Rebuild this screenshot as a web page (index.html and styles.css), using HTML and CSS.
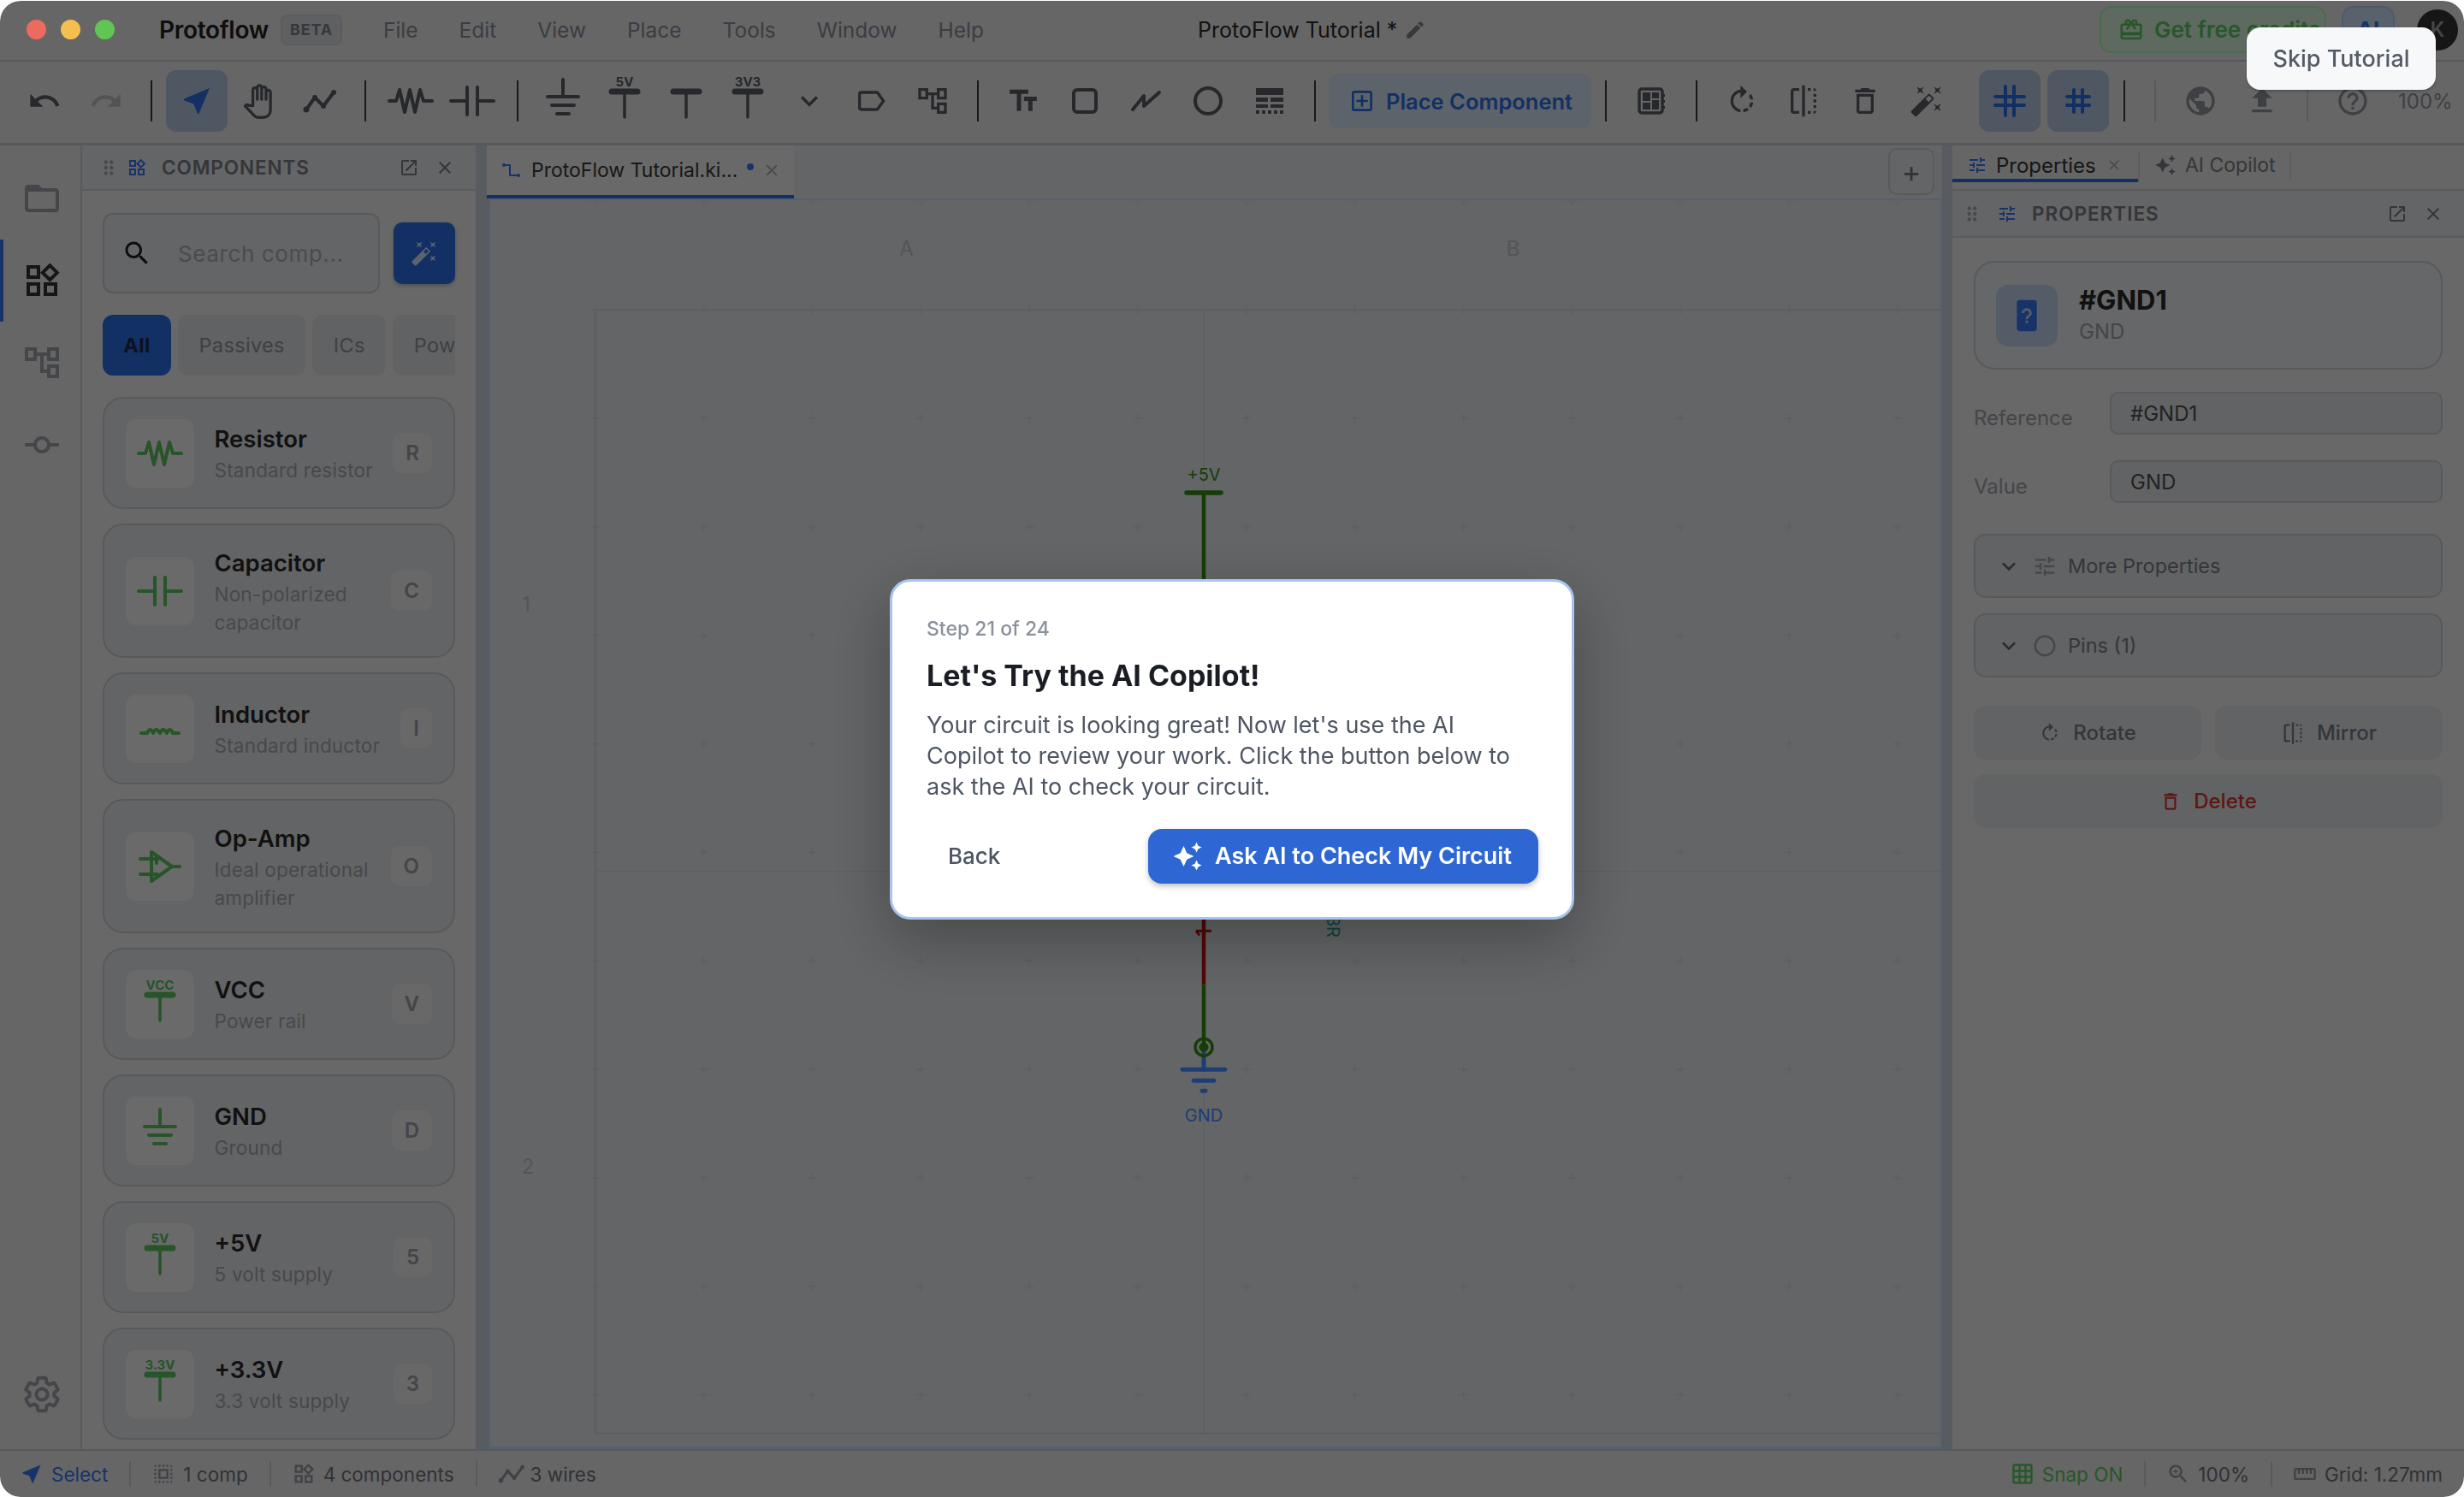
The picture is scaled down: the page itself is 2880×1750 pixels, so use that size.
FILE: index.html
```html
<!DOCTYPE html>
<html lang="en">
<head>
  <meta charset="UTF-8">
  <title>Protoflow</title>
  <link rel="stylesheet" href="styles.css">
</head>
<body>
<svg class="sprite" aria-hidden="true">
  <symbol id="i-undo" viewBox="0 0 24 24"><path d="M12.5 8c-2.65 0-5.05.99-6.9 2.6L2 7v9h9l-3.62-3.62c1.39-1.16 3.16-1.88 5.12-1.88 3.54 0 6.55 2.31 7.6 5.5l2.37-.78C21.08 11.03 17.15 8 12.5 8z"/></symbol>
  <symbol id="i-redo" viewBox="0 0 24 24"><path d="M18.4 10.6C16.55 8.99 14.15 8 11.5 8c-4.65 0-8.58 3.03-9.96 7.22L3.9 16c1.05-3.19 4.05-5.5 7.6-5.5 1.95 0 3.73.72 5.12 1.88L13 16h9V7l-3.6 3.6z"/></symbol>
  <symbol id="i-near" viewBox="0 0 24 24"><path d="M21 3L3 10.53v.98l6.84 2.65L12.48 21h.98L21 3z"/></symbol>
  <symbol id="i-hand" viewBox="0 0 24 24"><path class="st s18" d="M8.5 15V5a1.4 1.4 0 0 1 2.8 0v6V3.5a1.4 1.4 0 0 1 2.8 0V11V4.5a1.4 1.4 0 0 1 2.8 0V11V6.5a1.4 1.4 0 0 1 2.8 0V18c0 2.5-2 4.5-4.5 4.5H12c-1 0-2-.4-2.7-1.2l-5.8-6.1c.6-.7 1.6-.9 2.4-.4z"/></symbol>
  <symbol id="i-wire" viewBox="0 0 56 56"><path class="st" d="M12 38 22 24l10 10 12-16"/><circle cx="12" cy="38" r="3.5"/><circle cx="22" cy="24" r="3"/><circle cx="32" cy="34" r="3"/><circle cx="44" cy="18" r="3"/></symbol>
  <symbol id="i-res" viewBox="0 0 56 56"><path class="st" d="M3 28h8l4-13 6 26 6-26 6 26 6-26 4 13h10"/></symbol>
  <symbol id="i-cap" viewBox="0 0 56 56"><path class="st" d="M3 28h19M22 12v32M34 12v32M34 28h19"/></symbol>
  <symbol id="i-ind" viewBox="0 0 56 56"><path class="st" d="M6 33h7q3.500-8 7 0q3.500-8 8 0q3.500-8 8 0q3.500-8 7 0h7"/></symbol>
  <symbol id="i-opamp" viewBox="0 0 56 56"><path class="st" d="M18 11 42 28 18 45zM42 28h9M5 19h20M5 37h20M24 15v9"/></symbol>
  <symbol id="i-gnd" viewBox="0 0 56 56"><path class="st" d="M28 3v20M10 23h36M15 33h26M21 43h14"/></symbol>
  <symbol id="i-rail" viewBox="0 0 56 56"><path class="st s3" d="M28 17v30"/><path class="st s6" d="M13 17h30"/></symbol>
  <symbol id="i-tag" viewBox="0 0 24 24"><path d="M17.630 5.840C17.270 5.330 16.670 5 16 5L5 5.010C3.900 5.010 3 5.900 3 7v10c0 1.100.9 1.990 2 1.990L16 19c.67 0 1.270-.33 1.630-.84L22 12l-4.370-6.160zM16 17H5V7h11l3.550 5L16 17z"/></symbol>
  <symbol id="i-tree" viewBox="0 0 24 24"><path d="M22 11V3h-7v3H9V3H2v8h7V8h2v10h4v3h7v-8h-7v3h-2V8h2v3h7zM7 9H4V5h3v4zm10 6h3v4h-3v-4zm0-10h3v4h-3V5z"/></symbol>
  <symbol id="i-title" viewBox="0 0 24 24"><path d="M2.500 4v3h5v12h3V7h5V4h-13zm19 5h-9v3h3v7h3v-7h3V9z"/></symbol>
  <symbol id="i-rect" viewBox="0 0 56 56"><rect class="st" x="15" y="15" width="26" height="26" rx="4"/></symbol>
  <symbol id="i-line" viewBox="0 0 56 56"><path class="st" d="M12 38 25 22v12l18-16"/></symbol>
  <symbol id="i-circle" viewBox="0 0 56 56"><circle class="st" cx="28" cy="28" r="15"/></symbol>
  <symbol id="i-table" viewBox="0 0 56 56"><path d="M12 13h32v8H12zM12 24h14v5H12zM29 24h15v5H29zM12 32h14v4H12zM29 32h15v4H29zM12 39h4v4h-4zM19 39h4v4h-4zM26 39h4v4h-4zM33 39h4v4h-4zM40 39h4v4h-4z"/></symbol>
  <symbol id="i-chip" viewBox="0 0 56 56"><rect class="st s3" x="14" y="14" width="27" height="28" rx="3"/><path d="M18 18h9v10h-9zM29 18h8v7h-8zM18 30h9v8h-9zM29 27h8v11h-8zM41 20h3v3h-3zM41 27h3v3h-3zM41 34h3v3h-3z"/></symbol>
  <symbol id="i-add" viewBox="0 0 24 24"><path d="M19 3H5c-1.110 0-2 .9-2 2v14c0 1.100.89 2 2 2h14c1.100 0 2-.9 2-2V5c0-1.100-.9-2-2-2zm0 16H5V5h14v14zm-8-2h2v-4h4v-2h-4V7h-2v4H7v2h4z"/></symbol>
  <symbol id="i-rotate" viewBox="0 0 24 24"><path d="M15.550 5.550L11 1v3.070C7.060 4.560 4 7.920 4 12s3.050 7.440 7 7.930v-2.020c-2.840-.48-5-2.940-5-5.910s2.160-5.430 5-5.910V10l4.550-4.450zM19.930 11c-.17-1.390-.72-2.730-1.620-3.890l-1.420 1.420c.54.75.88 1.600 1.020 2.470h2.020zM13 17.900v2.020c1.390-.17 2.740-.71 3.900-1.610l-1.440-1.440c-.75.54-1.590.89-2.460 1.030zm3.890-2.420l1.420 1.410c.9-1.160 1.450-2.500 1.620-3.890h-2.020c-.14.87-.48 1.720-1.020 2.480z"/></symbol>
  <symbol id="i-flip" viewBox="0 0 24 24"><path d="M15 21h2v-2h-2v2zm4-12h2V7h-2v2zM3 5v14c0 1.100.9 2 2 2h4v-2H5V5h4V3H5c-1.100 0-2 .9-2 2zm16-2v2h2c0-1.100-.9-2-2-2zm-8 20h2V1h-2v22zm8-6h2v-2h-2v2zM15 5h2V3h-2v2zm4 8h2v-2h-2v2zm0 8c1.100 0 2-.9 2-2h-2v2z"/></symbol>
  <symbol id="i-trash" viewBox="0 0 24 24"><path d="M6 19c0 1.100.9 2 2 2h8c1.100 0 2-.9 2-2V7H6v12zM8 9h8v10H8V9zm7.500-5l-1-1h-5l-1 1H5v2h14V4z"/></symbol>
  <symbol id="i-wand" viewBox="0 0 24 24"><path d="M7.500 5.600L10 7 8.600 4.500 10 2 7.500 3.400 5 2l1.400 2.500L5 7zm12 9.800L17 14l1.400 2.500L17 19l2.500-1.400L22 19l-1.400-2.500L22 14zM22 2l-2.500 1.400L17 2l1.400 2.500L17 7l2.500-1.400L22 7l-1.400-2.500zm-7.630 5.290c-.39-.39-1.020-.39-1.410 0L1.290 18.960c-.39.39-.39 1.020 0 1.410l2.340 2.340c.39.39 1.020.39 1.410 0L16.700 11.050c.39-.39.39-1.020 0-1.410l-2.330-2.350zm-1.030 5.490l-2.120-2.120 2.440-2.440 2.120 2.120-2.440 2.440z"/></symbol>
  <symbol id="i-hash1" viewBox="0 0 56 56"><path class="st" d="M23 11v34M33 11v34M11 23h34M11 33h34"/></symbol>
  <symbol id="i-hash2" viewBox="0 0 56 56"><path class="st" d="M23 15v26M33 15v26M15 23h26M15 33h26"/></symbol>
  <symbol id="i-globe" viewBox="0 0 24 24"><path d="M12 2C6.480 2 2 6.480 2 12s4.480 10 10 10 10-4.480 10-10S17.520 2 12 2zm-1 17.930c-3.950-.49-7-3.850-7-7.930 0-.62.08-1.210.21-1.790L9 15v1c0 1.100.9 2 2 2v1.930zm6.900-2.540c-.26-.81-1-1.390-1.900-1.390h-1v-3c0-.55-.45-1-1-1H8v-2h2c.55 0 1-.45 1-1V7h2c1.100 0 2-.9 2-2v-.41c2.930 1.190 5 4.060 5 7.410 0 2.080-.8 3.970-2.100 5.390z"/></symbol>
  <symbol id="i-upload" viewBox="0 0 24 24"><path d="M5 20h14v-2H5v2zm0-10h4v6h6v-6h4l-7-7-7 7z"/></symbol>
  <symbol id="i-help" viewBox="0 0 24 24"><path d="M11 18h2v-2h-2v2zm1-16C6.480 2 2 6.480 2 12s4.480 10 10 10 10-4.480 10-10S17.520 2 12 2zm0 18c-4.410 0-8-3.590-8-8s3.590-8 8-8 8 3.590 8 8-3.590 8-8 8zm0-14c-2.210 0-4 1.790-4 4h2c0-1.100.9-2 2-2s2 .9 2 2c0 2-3 1.750-3 5h2c0-2.250 3-2.500 3-5 0-2.210-1.790-4-4-4z"/></symbol>
  <symbol id="i-gift" viewBox="0 0 24 24"><path d="M20 6h-2.180c.11-.31.18-.65.18-1 0-1.660-1.340-3-3-3-1.050 0-1.960.54-2.500 1.350l-.5.67-.5-.68C10.960 2.540 10.050 2 9 2 7.340 2 6 3.340 6 5c0 .35.07.69.18 1H4c-1.110 0-1.990.89-1.990 2L2 19c0 1.110.89 2 2 2h16c1.110 0 2-.89 2-2V8c0-1.110-.89-2-2-2zm-5-2c.55 0 1 .45 1 1s-.45 1-1 1-1-.45-1-1 .45-1 1-1zM9 4c.55 0 1 .45 1 1s-.45 1-1 1-1-.45-1-1 .45-1 1-1zm11 15H4v-2h16v2zm0-5H4V8h5.080L7 10.830 8.620 12 11 8.760l1-1.360 1 1.360L15.380 12 17 10.830 14.920 8H20v6z"/></symbol>
  <symbol id="i-pencil" viewBox="0 0 24 24"><path d="M3 17.250V21h3.750L17.810 9.940l-3.750-3.750L3 17.250zM20.710 7.040c.39-.39.39-1.020 0-1.410l-2.340-2.340c-.39-.39-1.020-.39-1.410 0l-1.830 1.830 3.750 3.750 1.830-1.830z"/></symbol>
  <symbol id="i-folder" viewBox="0 0 24 24"><path d="M20 6h-8l-2-2H4c-1.100 0-1.990.9-1.990 2L2 18c0 1.100.9 2 2 2h16c1.100 0 2-.9 2-2V8c0-1.100-.9-2-2-2zm0 12H4V8h16v10z"/></symbol>
  <symbol id="i-widgets" viewBox="0 0 24 24"><path d="M16.660 4.520l2.830 2.830-2.830 2.830-2.830-2.830 2.830-2.830M9 5v4H5V5h4m10 10v4h-4v-4h4M9 15v4H5v-4h4m7.660-13.310L11 7.340 16.660 13l5.660-5.660-5.660-5.650zM11 3H3v8h8V3zm10 10h-8v8h8v-8zm-10 0H3v8h8v-8z"/></symbol>
  <symbol id="i-commit" viewBox="0 0 24 24"><path d="M16.900 11c-.46-2.280-2.480-4-4.900-4s-4.440 1.720-4.900 4H2v2h5.100c.46 2.280 2.480 4 4.900 4s4.440-1.720 4.900-4H22v-2h-5.100zM12 15c-1.660 0-3-1.340-3-3s1.340-3 3-3 3 1.340 3 3-1.340 3-3 3z"/></symbol>
  <symbol id="i-gear" viewBox="0 0 24 24"><path class="st s2" d="M19.140 12.940c.04-.3.06-.61.06-.94 0-.32-.02-.64-.07-.94l2.030-1.580c.18-.14.23-.41.12-.61l-1.920-3.320c-.12-.22-.37-.29-.59-.22l-2.390.96c-.5-.38-1.030-.7-1.620-.94L14.400 2.810c-.04-.24-.24-.41-.48-.41h-3.840c-.24 0-.43.17-.47.41L9.250 5.350c-.59.24-1.130.57-1.620.94l-2.390-.96c-.22-.08-.47 0-.59.22L2.740 8.870c-.12.21-.08.47.12.61l2.030 1.580c-.05.3-.09.63-.09.94s.02.64.07.94l-2.030 1.580c-.18.14-.23.41-.12.61l1.920 3.320c.12.22.37.29.59.22l2.390-.96c.5.38 1.030.7 1.620.94l.36 2.540c.05.24.24.41.48.41h3.840c.24 0 .44-.17.47-.41l.36-2.540c.59-.24 1.130-.56 1.620-.94l2.390.96c.22.08.47 0 .59-.22l1.920-3.320c.12-.22.07-.47-.12-.61l-2.010-1.580z"/><circle class="st s2" cx="12" cy="12" r="3.300"/></symbol>
  <symbol id="i-drag" viewBox="0 0 24 24"><path d="M11 18c0 1.100-.9 2-2 2s-2-.9-2-2 .9-2 2-2 2 .9 2 2zm-2-8c-1.100 0-2 .9-2 2s.9 2 2 2 2-.9 2-2-.9-2-2-2zm0-6c-1.100 0-2 .9-2 2s.9 2 2 2 2-.9 2-2-.9-2-2-2zm6 4c1.100 0 2-.9 2-2s-.9-2-2-2-2 .9-2 2 .9 2 2 2zm0 2c-1.100 0-2 .9-2 2s.9 2 2 2 2-.9 2-2-.9-2-2-2zm0 6c-1.100 0-2 .9-2 2s.9 2 2 2 2-.9 2-2-.9-2-2-2z"/></symbol>
  <symbol id="i-open" viewBox="0 0 24 24"><path d="M19 19H5V5h7V3H5c-1.110 0-2 .9-2 2v14c0 1.100.89 2 2 2h14c1.100 0 2-.9 2-2v-7h-2v7zM14 3v2h3.590l-9.830 9.830 1.410 1.410L19 6.410V10h2V3h-7z"/></symbol>
  <symbol id="i-close" viewBox="0 0 24 24"><path d="M19 6.410L17.590 5 12 10.590 6.410 5 5 6.410 10.590 12 5 17.590 6.410 19 12 13.410 17.590 19 19 17.590 13.410 12z"/></symbol>
  <symbol id="i-search" viewBox="0 0 24 24"><path d="M15.500 14h-.79l-.28-.27C15.410 12.590 16 11.110 16 9.500 16 5.910 13.090 3 9.500 3S3 5.910 3 9.500 5.910 16 9.500 16c1.610 0 3.090-.59 4.230-1.570l.27.28v.79l5 4.990L20.490 19l-4.990-5zm-6 0C7.010 14 5 11.990 5 9.500S7.010 5 9.500 5 14 7.010 14 9.500 11.990 14 9.500 14z"/></symbol>
  <symbol id="i-zoom" viewBox="0 0 24 24"><path d="M15.500 14h-.79l-.28-.27C15.410 12.590 16 11.110 16 9.500 16 5.910 13.090 3 9.500 3S3 5.910 3 9.500 5.910 16 9.500 16c1.610 0 3.090-.59 4.230-1.570l.27.28v.79l5 4.990L20.490 19l-4.990-5zm-6 0C7.010 14 5 11.990 5 9.500S7.010 5 9.500 5 14 7.010 14 9.500 11.990 14 9.500 14zM12 10h-2v2H9v-2H7V9h2V7h1v2h2v1z"/></symbol>
  <symbol id="i-tune" viewBox="0 0 24 24"><path d="M3 17v2h6v-2H3zM3 5v2h10V5H3zm10 16v-2h8v-2h-8v-2h-2v6h2zM7 9v2H3v2h4v2h2V9H7zm14 4v-2H11v2h10zm-6-4h2V7h4V5h-4V3h-2v6z"/></symbol>
  <symbol id="i-spark" viewBox="0 0 24 24"><path d="M19 9l1.250-2.750L23 5l-2.750-1.250L19 1l-1.250 2.750L15 5l2.750 1.250L19 9zm-7.500.5L9 4 6.500 9.500 1 12l5.500 2.500L9 20l2.500-5.500L17 12l-5.500-2.500zM19 15l-1.250 2.750L15 19l2.750 1.250L19 23l1.250-2.750L23 19l-2.750-1.250L19 15z"/></symbol>
  <symbol id="i-chevron" viewBox="0 0 24 24"><path d="M16.590 8.590L12 13.170 7.410 8.590 6 10l6 6 6-6z"/></symbol>
  <symbol id="i-unknown" viewBox="0 0 24 24"><path d="M17 1H7c-1.100 0-2 .9-2 2v18c0 1.100.9 2 2 2h10c1.100 0 2-.9 2-2V3c0-1.100-.9-2-2-2zm-5 5.720c-1.960 0-3.500 1.520-3.500 3.470h1.750c0-.93.82-1.750 1.750-1.750s1.750.82 1.750 1.750c0 1.750-2.630 1.530-2.630 4.410h1.760c0-1.970 2.620-2.190 2.620-4.410 0-1.950-1.540-3.470-3.500-3.470zm-.88 8.800h1.760v1.760h-1.760z" fill-rule="evenodd"/></symbol>
  <symbol id="i-wiretab" viewBox="0 0 24 24"><path class="st s2" d="M3 6h7v12h10"/><circle cx="3" cy="6" r="2"/><circle cx="20" cy="18" r="2"/></symbol>
  <symbol id="i-select" viewBox="0 0 24 24"><path d="M3 5h2V3c-1.100 0-2 .9-2 2zm0 8h2v-2H3v2zm4 8h2v-2H7v2zM3 9h2V7H3v2zm10-6h-2v2h2V3zm6 0v2h2c0-1.100-.9-2-2-2zM5 21v-2H3c0 1.100.9 2 2 2zm-2-4h2v-2H3v2zM9 3H7v2h2V3zm2 18h2v-2h-2v2zm8-8h2v-2h-2v2zm0 8c1.100 0 2-.9 2-2h-2v2zm0-12h2V7h-2v2zm0 8h2v-2h-2v2zm-4 4h2v-2h-2v2zm0-16h2V3h-2v2zM7 17h10V7H7v10zm2-8h6v6H9V9z"/></symbol>
  <symbol id="i-grid" viewBox="0 0 24 24"><path d="M20 2H4c-1.100 0-2 .9-2 2v16c0 1.100.9 2 2 2h16c1.100 0 2-.9 2-2V4c0-1.100-.9-2-2-2zM8 20H4v-4h4v4zm0-6H4v-4h4v4zm0-6H4V4h4v4zm6 12h-4v-4h4v4zm0-6h-4v-4h4v4zm0-6h-4V4h4v4zm6 12h-4v-4h4v4zm0-6h-4v-4h4v4zm0-6h-4V4h4v4z"/></symbol>
  <symbol id="i-ruler" viewBox="0 0 24 24"><path d="M21 6H3c-1.100 0-2 .9-2 2v8c0 1.100.9 2 2 2h18c1.100 0 2-.9 2-2V8c0-1.100-.9-2-2-2zm0 10H3V8h2v4h2V8h2v4h2V8h2v4h2V8h2v4h2V8h2v8z"/></symbol>
  <symbol id="i-ring" viewBox="0 0 24 24"><circle class="st s2" cx="12" cy="12" r="9"/></symbol>
</svg>

<div class="app">
  <header class="titlebar">
    <div class="lights"><i class="light red"></i><i class="light yellow"></i><i class="light green"></i></div>
    <span class="brand">Protoflow</span>
    <span class="beta">BETA</span>
    <nav class="menu">
      <span>File</span><span>Edit</span><span>View</span><span>Place</span><span>Tools</span><span>Window</span><span>Help</span>
    </nav>
    <div class="doc-title">ProtoFlow Tutorial *<svg class="ic i26 pencil"><use href="#i-pencil"/></svg></div>
    <div class="title-right">
      <button class="credits"><svg class="ic i30"><use href="#i-gift"/></svg>Get free credits</button>
      <button class="ai-btn">AI</button>
      <div class="avatar">K</div>
    </div>
  </header>

  <div class="toolbar">
    <span class="tb"><svg class="ic i40"><use href="#i-undo"/></svg></span>
    <span class="tb muted"><svg class="ic i40"><use href="#i-redo"/></svg></span>
    <i class="sep"></i>
    <span class="tb on"><svg class="ic i40"><use href="#i-near"/></svg></span>
    <span class="tb"><svg class="ic i44"><use href="#i-hand"/></svg></span>
    <span class="tb"><svg class="ic i56"><use href="#i-wire"/></svg></span>
    <i class="sep"></i>
    <span class="tb"><svg class="ic i56"><use href="#i-res"/></svg></span>
    <span class="tb"><svg class="ic i56"><use href="#i-cap"/></svg></span>
    <i class="sep"></i>
    <span class="tb"><svg class="ic i56"><use href="#i-gnd"/></svg></span>
    <span class="tb"><svg class="ic i56"><use href="#i-rail"/><text class="rail-txt" x="28" y="11">5V</text></svg></span>
    <span class="tb"><svg class="ic i56"><use href="#i-rail"/></svg></span>
    <span class="tb"><svg class="ic i56"><use href="#i-rail"/><text class="rail-txt" x="28" y="11">3V3</text></svg></span>
    <span class="tb"><svg class="ic i40"><use href="#i-chevron"/></svg></span>
    <span class="tb"><svg class="ic i40"><use href="#i-tag"/></svg></span>
    <span class="tb"><svg class="ic i40"><use href="#i-tree"/></svg></span>
    <i class="sep"></i>
    <span class="tb"><svg class="ic i40"><use href="#i-title"/></svg></span>
    <span class="tb"><svg class="ic i56"><use href="#i-rect"/></svg></span>
    <span class="tb"><svg class="ic i56"><use href="#i-line"/></svg></span>
    <span class="tb"><svg class="ic i56"><use href="#i-circle"/></svg></span>
    <span class="tb"><svg class="ic i56"><use href="#i-table"/></svg></span>
    <i class="sep"></i>
    <button class="place"><svg class="ic i32"><use href="#i-add"/></svg>Place Component</button>
    <i class="sep"></i>
    <span class="tb"><svg class="ic i56"><use href="#i-chip"/></svg></span>
    <i class="sep"></i>
    <span class="tb"><svg class="ic i40"><use href="#i-rotate"/></svg></span>
    <span class="tb"><svg class="ic i40"><use href="#i-flip"/></svg></span>
    <span class="tb"><svg class="ic i40"><use href="#i-trash"/></svg></span>
    <span class="tb"><svg class="ic i40"><use href="#i-wand"/></svg></span>
    <span class="tb on grid-a"><svg class="ic i56"><use href="#i-hash1"/></svg></span>
    <span class="tb on grid-b"><svg class="ic i56"><use href="#i-hash2"/></svg></span>
    <i class="sep sep-end"></i>
    <i class="sep faint first"></i>
    <span class="tb gray"><svg class="ic i40"><use href="#i-globe"/></svg></span>
    <span class="tb gray"><svg class="ic i40"><use href="#i-upload"/></svg></span>
    <i class="sep faint"></i>
    <span class="tb gray"><svg class="ic i40"><use href="#i-help"/></svg></span>
    <span class="zoom-val">100%</span>
  </div>

  <div class="main">
    <aside class="rail">
      <span class="rail-btn"><svg class="ic i48"><use href="#i-folder"/></svg></span>
      <span class="rail-btn active"><svg class="ic i48"><use href="#i-widgets"/></svg></span>
      <span class="rail-btn"><svg class="ic i48"><use href="#i-tree"/></svg></span>
      <span class="rail-btn"><svg class="ic i48"><use href="#i-commit"/></svg></span>
      <span class="rail-btn rail-bottom"><svg class="ic i48"><use href="#i-gear"/></svg></span>
    </aside>

    <section class="left-panel">
      <div class="panel-head">
        <svg class="ic i26 drag"><use href="#i-drag"/></svg>
        <svg class="ic i24 head-ic"><use href="#i-widgets"/></svg>
        <span class="panel-name">COMPONENTS</span>
        <svg class="ic i24 head-open"><use href="#i-open"/></svg>
        <svg class="ic i24 head-close"><use href="#i-close"/></svg>
      </div>
      <div class="left-body">
        <div class="search-row">
          <div class="search"><svg class="ic i36"><use href="#i-search"/></svg><span>Search comp...</span></div>
          <button class="wand-btn"><svg class="ic i32"><use href="#i-wand"/></svg></button>
        </div>
        <div class="filters">
          <span class="chip active">All</span>
          <span class="chip">Passives</span>
          <span class="chip">ICs</span>
          <span class="chip">Power</span>
        </div>
        <div class="cards">
          <div class="card">
            <span class="card-ic"><svg class="ic i56"><use href="#i-res"/></svg></span>
            <div class="card-txt"><b>Resistor</b><small>Standard resistor</small></div>
            <kbd>R</kbd>
          </div>
          <div class="card">
            <span class="card-ic"><svg class="ic i56"><use href="#i-cap"/></svg></span>
            <div class="card-txt"><b>Capacitor</b><small>Non-polarized capacitor</small></div>
            <kbd>C</kbd>
          </div>
          <div class="card">
            <span class="card-ic"><svg class="ic i56"><use href="#i-ind"/></svg></span>
            <div class="card-txt"><b>Inductor</b><small>Standard inductor</small></div>
            <kbd>I</kbd>
          </div>
          <div class="card">
            <span class="card-ic"><svg class="ic i56"><use href="#i-opamp"/></svg></span>
            <div class="card-txt"><b>Op-Amp</b><small>Ideal operational amplifier</small></div>
            <kbd>O</kbd>
          </div>
          <div class="card">
            <span class="card-ic"><svg class="ic i56"><use href="#i-rail"/><text class="rail-txt" x="28" y="11">VCC</text></svg></span>
            <div class="card-txt"><b>VCC</b><small>Power rail</small></div>
            <kbd>V</kbd>
          </div>
          <div class="card">
            <span class="card-ic"><svg class="ic i56"><use href="#i-gnd"/></svg></span>
            <div class="card-txt"><b>GND</b><small>Ground</small></div>
            <kbd>D</kbd>
          </div>
          <div class="card">
            <span class="card-ic"><svg class="ic i56"><use href="#i-rail"/><text class="rail-txt" x="28" y="11">5V</text></svg></span>
            <div class="card-txt"><b>+5V</b><small>5 volt supply</small></div>
            <kbd>5</kbd>
          </div>
          <div class="card">
            <span class="card-ic"><svg class="ic i56"><use href="#i-rail"/><text class="rail-txt" x="28" y="11">3.3V</text></svg></span>
            <div class="card-txt"><b>+3.3V</b><small>3.3 volt supply</small></div>
            <kbd>3</kbd>
          </div>
        </div>
      </div>
    </section>

    <div class="splitter"></div>

    <section class="center">
      <div class="tabs">
        <div class="doc-tab">
          <svg class="ic i24 tab-ic"><use href="#i-wiretab"/></svg>
          <span class="doc-name">ProtoFlow Tutorial.ki...</span>
          <i class="dirty"></i>
          <svg class="ic i22 tab-x"><use href="#i-close"/></svg>
        </div>
        <button class="tab-add">+</button>
      </div>
      <div class="canvas">
        <svg class="schematic" viewBox="573 234 1697 1456">
          <defs>
            <pattern id="crosses" x="632.500" y="297.500" width="127" height="127" patternUnits="userSpaceOnUse">
              <path class="cross" d="M58.500 63.500h10M63.500 58.500v10"/>
            </pattern>
          </defs>
          <rect x="573" y="234" width="1697" height="1456" fill="url(#crosses)"/>
          <path class="frame" d="M696 1676V361H2270"/>
          <path class="frame" d="M696 1676H2270"/>
          <path class="frame-thin" d="M696 1018H2270M1408 361V1676"/>
          <text class="sheet-label" x="1060" y="298">A</text>
          <text class="sheet-label" x="1770" y="298">B</text>
          <text class="sheet-label" x="615" y="714">1</text>
          <text class="sheet-label" x="617" y="1372">2</text>

          <text class="sym-label lbl-green" x="1408" y="561">+5V</text>
          <path class="wire-green thick" d="M1388 575h40"/>
          <path class="wire-green" d="M1408 575V680"/>

          <path class="wire-red thin" d="M1376 1073h69"/>
          <path class="wire-red" d="M1408 1070V1150"/>
          <path class="wire-red thin" d="M1399 1088h18M1399 1088l4 5"/>
          <path class="wire-green" d="M1408 1150V1224"/>
          <path class="wire-blue" d="M1408 1230V1250"/>
          <circle class="wire-green node" cx="1408" cy="1224" r="10"/>
          <circle class="node-dot" cx="1408" cy="1224" r="5.500"/>
          <path class="wire-blue bars" d="M1383 1250h50M1396 1263h24M1406 1275h4"/>
          <text class="sym-label lbl-blue" x="1408" y="1311">GND</text>
          <text class="sym-label lbl-teal" transform="translate(1552 1058) rotate(90)" x="0" y="0">33R</text>
        </svg>
      </div>
    </section>

    <div class="splitter splitter-r"></div>

    <aside class="right-panel">
      <div class="right-tabs">
        <div class="r-tab active">
          <svg class="ic i24 head-ic"><use href="#i-tune"/></svg><span>Properties</span>
          <svg class="ic i20 tab-x"><use href="#i-close"/></svg>
        </div>
        <div class="r-tab r-tab-ai">
          <svg class="ic i26"><use href="#i-spark"/></svg><span>AI Copilot</span>
        </div>
      </div>
      <div class="panel-head prop-head">
        <svg class="ic i26 drag"><use href="#i-drag"/></svg>
        <svg class="ic i24 head-ic"><use href="#i-tune"/></svg>
        <span class="panel-name">PROPERTIES</span>
        <svg class="ic i24 head-open"><use href="#i-open"/></svg>
        <svg class="ic i24 head-close"><use href="#i-close"/></svg>
      </div>
      <div class="prop-body">
        <div class="info-card">
          <span class="info-ic"><svg class="ic i40"><use href="#i-unknown"/></svg></span>
          <div class="info-txt"><b>#GND1</b><small>GND</small></div>
        </div>
        <div class="field"><label>Reference</label><span class="input">#GND1</span></div>
        <div class="field"><label>Value</label><span class="input">GND</span></div>
        <div class="fold fold-first">
          <svg class="ic i32 fold-arrow"><use href="#i-chevron"/></svg>
          <svg class="ic i30 fold-ic"><use href="#i-tune"/></svg><span>More Properties</span>
        </div>
        <div class="fold">
          <svg class="ic i32 fold-arrow"><use href="#i-chevron"/></svg>
          <svg class="ic i30 fold-ic"><use href="#i-ring"/></svg><span>Pins (1)</span>
        </div>
        <div class="action-row">
          <button class="action"><svg class="ic i26"><use href="#i-rotate"/></svg>Rotate</button>
          <button class="action"><svg class="ic i28"><use href="#i-flip"/></svg>Mirror</button>
        </div>
        <button class="action danger"><svg class="ic i26"><use href="#i-trash"/></svg>Delete</button>
      </div>
    </aside>
  </div>

  <footer class="status">
    <span class="st-item blue"><svg class="ic i28"><use href="#i-near"/></svg>Select</span><i class="st-sep"></i>
    <span class="st-item"><svg class="ic i28 soft"><use href="#i-select"/></svg>1 comp</span><i class="st-sep"></i>
    <span class="st-item"><svg class="ic i28 soft"><use href="#i-widgets"/></svg>4 components</span><i class="st-sep"></i>
    <span class="st-item"><svg class="ic i44 soft st-wire"><use href="#i-wire"/></svg>3 wires</span>
    <span class="st-spacer"></span>
    <span class="st-item greenish"><svg class="ic i28"><use href="#i-grid"/></svg>Snap ON</span><i class="st-sep"></i>
    <span class="st-item"><svg class="ic i28 soft"><use href="#i-zoom"/></svg>100%</span><i class="st-sep"></i>
    <span class="st-item"><svg class="ic i28 soft"><use href="#i-ruler"/></svg>Grid: 1.27mm</span>
  </footer>

  <div class="overlay">
    <button class="skip">Skip Tutorial</button>
    <div class="modal">
      <div class="step">Step 21 of 24</div>
      <h2>Let's Try the AI Copilot!</h2>
      <p>Your circuit is looking great! Now let's use the AI Copilot to review your work. Click the button below to ask the AI to check your circuit.</p>
      <div class="modal-actions">
        <button class="back">Back</button>
        <button class="ask"><svg class="ic i36"><use href="#i-spark"/></svg>Ask AI to Check My Circuit</button>
      </div>
    </div>
  </div>
</div>
</body>
</html>
```

FILE: styles.css
```css
* { box-sizing: border-box; }
html, body { margin: 0; padding: 0; }
body {
  width: 2880px;
  height: 1750px;
  overflow: hidden;
  background: #fff;
  font-family: Inter, "Liberation Sans", sans-serif;
  color: #222;
}
button { font-family: inherit; border: 0; background: none; padding: 0; margin: 0; }
.sprite { position: absolute; width: 0; height: 0; }

/* icons */
.ic { display: block; flex-shrink: 0; fill: currentColor; overflow: visible; }
.i20 { width: 20px; height: 20px; }
.i22 { width: 22px; height: 22px; }
.i24 { width: 24px; height: 24px; }
.i26 { width: 26px; height: 26px; }
.i28 { width: 28px; height: 28px; }
.i30 { width: 30px; height: 30px; }
.i32 { width: 32px; height: 32px; }
.i36 { width: 36px; height: 36px; }
.i40 { width: 40px; height: 40px; }
.i44 { width: 44px; height: 44px; }
.i48 { width: 48px; height: 48px; }
.i56 { width: 56px; height: 56px; }
.st { fill: none; stroke: currentColor; stroke-width: 4; stroke-linecap: round; stroke-linejoin: round; }
.s18 { stroke-width: 1.8; }
.s2 { stroke-width: 2; }
.s3 { stroke-width: 3.5; }
.s6 { stroke-width: 7; }
.rail-txt { font-size: 15px; font-weight: 700; text-anchor: middle; fill: currentColor; font-family: Inter, sans-serif; }

/* window */
.app {
  position: relative;
  margin-top: 1px;
  width: 2880px;
  height: 1749px;
  border-radius: 24px;
  overflow: hidden;
  background: #ccc;
  display: flex;
  flex-direction: column;
}

/* title bar */
.titlebar {
  height: 71px;
  flex-shrink: 0;
  display: flex;
  align-items: center;
  padding: 0 7px 2px 31px;
  border-bottom: 2px solid #acb0b8;
}
.lights { display: flex; gap: 17px; margin-right: 52px; position: relative; z-index: 60; }
.light { width: 23px; height: 23px; border-radius: 50%; display: block; }
.red { background: #ed6a5e; }
.yellow { background: #f5bf4f; }
.green { background: #61c554; }
.brand { font-size: 28px; font-weight: 600; color: #1c1c1c; letter-spacing: -.3px; }
.beta {
  margin-left: 14px;
  width: 72px;
  height: 36px;
  border: 2px solid #b4b8c0;
  border-radius: 8px;
  background: #bcc0c4;
  color: #6c717b;
  font-size: 18px;
  font-weight: 700;
  letter-spacing: .8px;
  display: flex;
  align-items: center;
  justify-content: center;
}
.menu { display: flex; gap: 48px; margin-left: 48px; font-size: 24.5px; color: #747a86; }
.doc-title { display: flex; align-items: center; gap: 8px; margin-left: 250px; font-size: 25px; color: #242424; }
.pencil { color: #6e7278; }
.title-right { margin-left: auto; display: flex; align-items: center; }
.credits {
  width: 265px;
  height: 55px;
  display: flex;
  align-items: center;
  gap: 12px;
  padding-left: 20px;
  border: 2px solid #94d69a;
  border-radius: 14px;
  background: #bcd2c0;
  color: #4eae52;
  font-size: 26px;
  font-weight: 600;
  white-space: nowrap;
}
.ai-btn {
  width: 62px;
  height: 55px;
  margin-left: 18px;
  border: 2px solid #9ab4dc;
  border-radius: 14px;
  background: #b2c2d8;
  color: #2e67d3;
  font-size: 26px;
  font-weight: 700;
}
.avatar {
  width: 48px;
  height: 48px;
  margin-left: 26px;
  border-radius: 50%;
  background: #2c2c2e;
  color: #8a8a8a;
  font-size: 24px;
  font-weight: 600;
  display: flex;
  align-items: center;
  justify-content: center;
}

/* toolbar */
.toolbar {
  height: 98px;
  flex-shrink: 0;
  display: flex;
  align-items: center;
  padding: 0 0 3px 16px;
  border-bottom: 3px solid #acb0b8;
  color: #4c5058;
}
.tb { width: 72px; height: 72px; display: flex; align-items: center; justify-content: center; flex-shrink: 0; border-radius: 12px; }
.tb.muted { color: #a4a6aa; }
.tb.gray { color: #7c8088; }
.tb.on { background: #9eaec4; color: #2560c8; }
.grid-a { margin-left: 25px; }
.grid-b { margin-left: 8px; }
.sep { width: 2px; height: 48px; margin: 0 16px; background: #333; flex-shrink: 0; }
.sep.faint { background: #b0b2b6; }
.sep.faint.first { margin-left: 0; }
.sep.sep-end { margin: 0 34px 0 17px; }
.place {
  width: 307px;
  height: 64px;
  margin: 0 0 0 -1px;
  display: flex;
  align-items: center;
  gap: 12px;
  padding-left: 23px;
  border-radius: 12px;
  background: #bac6d4;
  color: #2560c8;
  font-size: 25.5px;
  font-weight: 600;
  white-space: nowrap;
}
.place + .sep { margin-left: 16px; }
.zoom-val { margin-left: 17px; font-size: 24px; color: #7c8088; }

/* main row */
.main { flex: 1; min-height: 0; display: flex; }
.rail {
  width: 96px;
  flex-shrink: 0;
  display: flex;
  flex-direction: column;
  padding: 14px 0 16px;
  border-right: 2px solid #b0b4ba;
  color: #888c94;
}
.rail-btn { height: 96px; display: flex; align-items: center; justify-content: center; padding-left: 4px; }
.rail-btn.active { color: #2c2c2c; box-shadow: inset 4px 0 0 #2e67d3; }
.rail-bottom { margin-top: auto; }

.left-panel { width: 460px; flex-shrink: 0; display: flex; flex-direction: column; background: #d0d0d0; min-height: 0; }
.panel-head {
  height: 53px;
  flex-shrink: 0;
  display: flex;
  align-items: center;
  padding: 0 24px 0 18px;
  border-bottom: 2px solid #b0b4ba;
  background: #c8cacc;
  color: #686c74;
}
.drag { color: #8c9096; }
.head-ic { color: #2e67d3; margin-left: 8px; }
.panel-name { margin-left: 17px; font-size: 22.5px; font-weight: 600; letter-spacing: .9px; color: #686c74; }
.head-open { margin-left: auto; }
.head-close { margin-left: 18px; }
.left-body { flex: 1; min-height: 0; overflow: hidden; padding: 26px 24px 0; }
.search-row { display: flex; align-items: center; gap: 16px; }
.search {
  width: 324px;
  height: 94px;
  display: flex;
  align-items: center;
  gap: 30px;
  padding-left: 20px;
  border: 2px solid #aeb2ba;
  border-radius: 12px;
  background: #c8cacc;
  color: #1c1c1c;
}
.search span { font-size: 26px; letter-spacing: .6px; color: #94989e; }
.wand-btn {
  width: 72px;
  height: 72px;
  display: flex;
  align-items: center;
  justify-content: center;
  border-radius: 10px;
  background: #2560c8;
  color: #b8c4dc;
  box-shadow: 0 2px 4px rgba(0, 0, 0, .25);
}
.filters { display: flex; gap: 8px; margin-top: 25px; overflow: hidden; }
.chip {
  height: 71px;
  padding: 0 24.5px;
  display: flex;
  align-items: center;
  flex-shrink: 0;
  border-radius: 12px;
  background: #c2c4c6;
  color: #7c8086;
  font-size: 23.5px;
  letter-spacing: .35px;
}
.chip.active { width: 80px; justify-content: center; padding: 0; background: #2560c8; color: #182440; font-weight: 700; }
.cards { display: flex; flex-direction: column; gap: 17px; margin-top: 25px; }
.card {
  display: flex;
  align-items: center;
  gap: 23.5px;
  padding: 23.5px 25px 23.5px 25px;
  border: 2px solid #aeb2ba;
  border-radius: 24px;
  background: #c6c8ca;
}
.card-ic {
  width: 80px;
  height: 80px;
  flex-shrink: 0;
  display: flex;
  align-items: center;
  justify-content: center;
  border-radius: 12px;
  background: #d4d4d4;
  color: #4ea850;
}
.card-txt { flex: 1; min-width: 0; margin-right: -14px; }
.card-txt b { display: block; font-size: 27.5px; line-height: 40px; font-weight: 600; color: #222; }
.card-txt small { display: block; font-size: 22.5px; line-height: 33px; color: #8e9298; letter-spacing: .2px; }
kbd {
  flex-shrink: 0;
  height: 47px;
  padding: 0 15px;
  display: flex;
  align-items: center;
  border-radius: 10px;
  background: #d0d0d0;
  color: #868a92;
  font-family: inherit;
  font-size: 24px;
  font-weight: 600;
}

.splitter { width: 15px; flex-shrink: 0; background: #b0b6c0; }
.splitter-r { width: 12px; }

/* center */
.center { width: 1699px; flex-shrink: 0; display: flex; flex-direction: column; min-height: 0; background: #c6cacc; }
.tabs {
  height: 64px;
  flex-shrink: 0;
  display: flex;
  align-items: flex-start;
  justify-content: space-between;
  border-bottom: 2px solid #a8c0e0;
}
.doc-tab {
  width: 359px;
  height: 62px;
  margin-left: -2px;
  display: flex;
  align-items: center;
  padding: 0 0 4px 17px;
  background: #d2d2d2;
  box-shadow: inset 0 -4px 0 #2560c8;
  color: #2e67d3;
}
.doc-name { margin-left: 11px; font-size: 23px; color: #303030; white-space: nowrap; }
.dirty { width: 8px; height: 8px; margin: -8px 0 0 11px; border-radius: 50%; background: #2e67d3; display: block; }
.tab-x { margin-left: auto; color: #909498; }
.doc-tab .tab-x { margin-right: 15px; }
.tab-add {
  width: 54px;
  height: 55px;
  margin: 3px 9px 0 0;
  border: 2px solid #b2b4b8;
  border-radius: 10px;
  color: #666;
  font-size: 34px;
  line-height: 1;
}
.canvas { flex: 1; min-height: 0; border: solid #a8c0e0; border-width: 0 2px 3px; }
.schematic { display: block; width: 100%; height: 100%; }
.cross { fill: none; stroke: #b8bcc0; stroke-width: 1.4; }
.frame { fill: none; stroke: #b8babe; stroke-width: 2; }
.frame-thin { fill: none; stroke: #bcc0c4; stroke-width: 1.4; }
.sheet-label { font-size: 24px; fill: #a8abb0; text-anchor: middle; font-family: Inter, sans-serif; }
.sym-label { font-size: 20px; text-anchor: middle; font-family: Inter, sans-serif; }
.lbl-green { fill: #2c7a10; }
.lbl-blue { fill: #3a7ae8; }
.lbl-teal { fill: #1e8a80; text-anchor: start; }
.wire-green { fill: none; stroke: #2c7a10; stroke-width: 4.500; }
.wire-green.thick { stroke-width: 5.500; stroke-linecap: round; }
.wire-green.node { stroke-width: 3.500; }
.node-dot { fill: #2c7a10; }
.wire-red { fill: none; stroke: #a81010; stroke-width: 4.500; }
.wire-red.thin { stroke-width: 3; }
.wire-blue { fill: none; stroke: #3a7ae8; stroke-width: 5; stroke-linecap: round; }

/* right panel */
.right-panel { flex: 1; min-width: 0; display: flex; flex-direction: column; background: #ccc; }
.right-tabs { height: 53px; flex-shrink: 0; display: flex; align-items: flex-start; padding-top: 7px; border-bottom: 2px solid #b0b4ba; }
.r-tab {
  height: 32px;
  display: flex;
  align-items: center;
  gap: 10px;
  padding: 0 16px 0 17px;
  border-right: 2px solid #b8babe;
  color: #686c74;
  font-size: 24px;
}
.r-tab.active { width: 219px; height: 36px; padding-bottom: 4px; box-shadow: inset 0 -4px 0 #2560c8; color: #2c2c2c; }
.r-tab.active .head-ic { margin-left: 0; }
.r-tab.active .tab-x { margin-left: 1px; }
.r-tab.active span { white-space: nowrap; }
.r-tab-ai { font-size: 23px; gap: 10px; }
.prop-head { height: 55px; padding-left: 10px; padding-right: 24px; }
.prop-head .head-ic { margin-left: 16px; }
.prop-head .panel-name { letter-spacing: 1px; }
.prop-body { flex: 1; padding: 27px 25px 0; min-height: 0; background: #d0d0d0; }
.info-card {
  height: 127px;
  display: flex;
  align-items: center;
  gap: 25px;
  padding-left: 24px;
  border: 2px solid #aeb2ba;
  border-radius: 24px;
  background: #ccced0;
}
.info-ic {
  width: 72px;
  height: 72px;
  display: flex;
  align-items: center;
  justify-content: center;
  border-radius: 14px;
  background: #a8b8d0;
  color: #2e67d3;
}
.info-txt { padding-top: 1px; }
.info-txt b { display: block; font-size: 31px; line-height: 36px; font-weight: 700; color: #222; }
.info-txt small { display: block; margin-top: 2px; font-size: 24px; line-height: 34px; color: #888c92; }
.field { display: flex; margin-top: 26px; }
.field + .field { margin-top: 30px; }
.field label { width: 159px; padding-top: 16px; font-size: 24px; line-height: 30px; color: #888c92; }
.input {
  flex: 1;
  height: 50px;
  display: flex;
  align-items: center;
  padding-left: 22px;
  border: 2px solid #aeb2ba;
  border-radius: 10px;
  background: #c4c6c8;
  color: #444;
  font-size: 24px;
}
.fold {
  height: 75px;
  display: flex;
  align-items: center;
  margin-top: 18px;
  padding-left: 23px;
  border: 2px solid #aeb2ba;
  border-radius: 14px;
  background: #c4c6c8;
  color: #686c74;
  font-size: 23.5px;
}
.fold-first { margin-top: 36px; }
.fold-arrow { color: #545860; }
.fold-ic { margin-left: 11px; color: #8a8e96; }
.fold span { margin-left: 12px; }
.action-row { display: flex; gap: 16px; margin-top: 33px; }
.action {
  flex: 1;
  height: 63px;
  display: flex;
  align-items: center;
  justify-content: center;
  gap: 14px;
  border-radius: 14px;
  background: #c4c6c8;
  color: #686c74;
  font-size: 24px;
  font-weight: 500;
  width: 100%;
}
.danger { margin-top: 17px; color: #b83028; }

/* status bar */
.status {
  height: 56px;
  flex-shrink: 0;
  display: flex;
  align-items: center;
  padding: 0 25px 0 23px;
  border-top: 2px solid #acb0b8;
  font-size: 22.5px;
  color: #60646c;
}
.st-item { display: flex; align-items: center; gap: 9px; white-space: nowrap; }
.st-item.blue { color: #2e67d3; }
.st-item.greenish { color: #4eae52; }
.st-item .soft { color: #7c828c; }
.st-wire { margin: 0 -9px 0 -6px; }
.st-sep { width: 2px; height: 30px; margin: 0 24px 0 25px; background: #b0b4ba; }
.st-spacer { margin-left: auto; }

/* tutorial layer */
.overlay {
  position: absolute;
  inset: 0;
  z-index: 50;
  display: flex;
  align-items: center;
  justify-content: center;
  background: rgba(0, 0, 0, .5);
  backdrop-filter: blur(.7px);
}
.skip {
  position: absolute;
  top: 31px;
  right: 33px;
  width: 221px;
  height: 73px;
  border-radius: 16px;
  background: #f7f8f9;
  color: #555b66;
  font-size: 27px;
  font-weight: 500;
  box-shadow: 0 2px 3px rgba(0, 0, 0, .2);
}
.modal {
  width: 800px;
  height: 398px;
  padding: 40px 39px 0 40px;
  border: 3px solid #a9c4ee;
  border-radius: 24px;
  background: #fff;
  box-shadow: 0 24px 70px rgba(0, 0, 0, .28);
}
.step { font-size: 23px; line-height: 30px; font-weight: 500; color: #8b919c; }
.modal h2 { margin: 18px 0 0; font-size: 34px; line-height: 44px; font-weight: 700; color: #1a1d23; }
.modal p { margin: 18px 0 0; max-width: 712px; font-size: 27px; line-height: 36px; color: #4e5563; }
.modal-actions { display: flex; align-items: center; justify-content: space-between; margin-top: 31px; }
.back { padding-left: 25px; font-size: 26px; font-weight: 500; color: #4e5563; }
.ask {
  width: 456px;
  height: 64px;
  display: flex;
  align-items: center;
  gap: 14px;
  padding-left: 28px;
  border-radius: 16px;
  background: #2e67d3;
  color: #fff;
  font-size: 27px;
  font-weight: 600;
  white-space: nowrap;
  box-shadow: 0 3px 6px rgba(0, 0, 0, .25);
}
```
